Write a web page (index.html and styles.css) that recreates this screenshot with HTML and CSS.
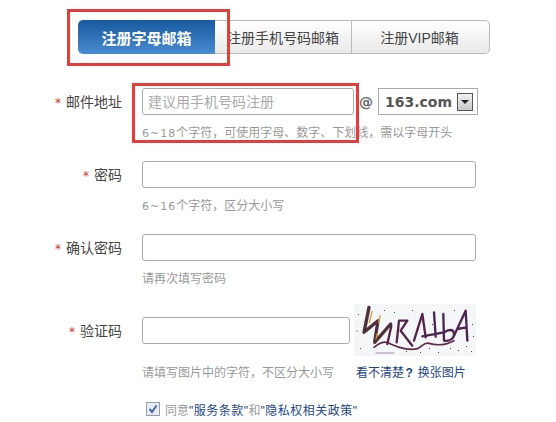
FILE: index.html
```html
<!DOCTYPE html>
<html lang="zh-CN">
<head>
  <meta charset="UTF-8">
  <title>注册邮箱</title>
  <link rel="stylesheet" href="styles.css">
</head>
<body>

<div class="page">
  <!-- Tabs -->
  <div class="tabs">
    <a class="tab tab-active">注册字母邮箱</a>
    <a class="tab tab-mid">注册手机号码邮箱</a>
    <a class="tab tab-last">注册VIP邮箱</a>
  </div>

  <!-- Mail address -->
  <div class="row">
    <label class="label"><span class="star">*</span>邮件地址</label>
    <div class="field">
      <div class="mail-line">
        <div class="input input-mail"><span class="placeholder">建议用手机号码注册</span></div>
        <span class="at">@</span>
        <div class="domain">
          <span class="domain-text">163.com</span>
          <span class="domain-arrow"></span>
        </div>
      </div>
      <p class="hint"><span class="num">6~18</span>个字符，可使用字母、数字、下划线，需以字母开头</p>
    </div>
  </div>

  <!-- Password -->
  <div class="row">
    <label class="label"><span class="star">*</span>密码</label>
    <div class="field">
      <div class="input input-wide"></div>
      <p class="hint"><span class="num">6~16</span>个字符，区分大小写</p>
    </div>
  </div>

  <!-- Confirm -->
  <div class="row">
    <label class="label"><span class="star">*</span>确认密码</label>
    <div class="field">
      <div class="input input-wide"></div>
      <p class="hint">请再次填写密码</p>
    </div>
  </div>

  <!-- Captcha -->
  <div class="row row-captcha">
    <label class="label"><span class="star">*</span>验证码</label>
    <div class="field">
      <div class="captcha-line">
        <div class="input input-code"></div>
        <svg class="captcha" width="122" height="52" viewBox="0 0 366 156">
          <rect width="366" height="156" fill="#f4f6f8"/>
          <g fill="none" stroke-linecap="round" stroke-linejoin="round">
            <path d="M45 10L30 85L72 50L62 115L110 60" stroke="#4e2f3c" stroke-width="10"/>
            <path d="M54 22L46 56M78 36L74 56M70 88L66 104" stroke="#c7a03c" stroke-width="4"/>
            <path d="M112 66L100 120" stroke="#55264a" stroke-width="7"/>
            <path d="M128 115L135 50L160 50L140 80L175 125" stroke="#55264a" stroke-width="7"/>
            <path d="M205 30L180 110M205 30L215 100" stroke="#55264a" stroke-width="7"/>
            <path d="M240 25L245 98M205 97L270 85" stroke="#4a2650" stroke-width="7"/>
            <path d="M268 30L270 110C285 112 302 105 300 88C298 74 282 76 270 86" stroke="#4a2650" stroke-width="7"/>
            <path d="M335 20L300 95M335 20L340 110M310 75L338 70" stroke="#4a2650" stroke-width="7"/>
            <path d="M60 130C75 118 90 108 110 120C135 132 170 140 190 134C205 128 210 114 225 118C245 124 270 126 300 110" stroke="#5e2a48" stroke-width="5"/>
            <path d="M66 147L120 147" stroke="#a58ab0" stroke-width="3"/>
          </g>
          <g fill="#444">
            <rect x="12" y="30" width="3" height="3"/><rect x="8" y="80" width="3" height="3"/>
            <rect x="90" y="18" width="3" height="3"/><rect x="120" y="24" width="3" height="3"/>
            <rect x="174" y="18" width="3" height="3"/><rect x="225" y="132" width="3" height="3"/>
            <rect x="252" y="144" width="3" height="3"/><rect x="288" y="132" width="3" height="3"/>
            <rect x="312" y="138" width="3" height="3"/><rect x="336" y="126" width="3" height="3"/>
            <rect x="351" y="141" width="3" height="3"/><rect x="300" y="18" width="3" height="3"/>
            <rect x="156" y="141" width="3" height="3"/><rect x="198" y="144" width="3" height="3"/>
            <rect x="18" y="132" width="3" height="3"/><rect x="354" y="60" width="3" height="3"/>
            <rect x="357" y="96" width="3" height="3"/><rect x="234" y="60" width="3" height="3"/>
          </g>
        </svg>
      </div>
      <div class="captcha-foot">
        <p class="hint hint-captcha">请填写图片中的字符，不区分大小写</p>
        <a class="change-link">看不清楚<b class="ask">?</b> 换张图片</a>
      </div>
    </div>
  </div>

  <!-- Agreement -->
  <div class="agree">
    <svg class="check" width="14" height="14" viewBox="0 0 14 14">
      <rect x="0.5" y="0.5" width="13" height="13" fill="#e6ebf5" stroke="#9a9ea6"/>
      <path d="M3.5 7L6 10L10.5 3.5" fill="none" stroke="#4a68a8" stroke-width="2"/>
    </svg>
    <span>同意</span><a class="agree-link">"服务条款"</a><span>和</span><a class="agree-link">"隐私权相关政策"</a>
  </div>

  <!-- Red annotation boxes -->
  <div class="mark mark-tab"></div>
  <div class="mark mark-mail"></div>
</div>

</body>
</html>
```

FILE: styles.css
```css
* {
  box-sizing: border-box;
}

body {
  margin: 0;
  background-color: #fff;
  font-family: "Liberation Sans", "Noto Sans CJK SC", sans-serif;
  color: #444;
}

.page {
  position: relative;
  width: 556px;
  height: 422px;
  padding-top: 20px;
  overflow: hidden;
}

/* Tabs */
.tabs {
  display: flex;
  width: 412px;
  height: 34px;
  margin-left: 78px;
  margin-bottom: 34px;
}

.tab {
  display: flex;
  align-items: center;
  justify-content: center;
  height: 34px;
  font-size: 14px;
  color: #444;
  background: linear-gradient(#fff, #e9e9e9);
  border: 1px solid #bbb;
  border-left: none;
}

.tab-active {
  width: 137px;
  font-size: 15px;
  font-weight: bold;
  color: #fff;
  background: linear-gradient(#175a9f, #4a8bd0);
  border: none;
  border-radius: 5px 0 0 5px;
}

.tab-mid {
  width: 137px;
  border-right: 1px solid #bbb;
}

.tab-last {
  width: 138px;
  padding-right: 2px;
  border-radius: 0 5px 5px 0;
}

/* Form rows */
.row {
  display: flex;
  height: 73px;
}

.row-captcha {
  height: 83px;
  margin-top: 10px;
}

.label {
  width: 122px;
  height: 27px;
  margin-right: 20px;
  text-align: right;
  font-size: 14px;
  line-height: 28px;
  color: #444;
}

.star {
  margin-right: 5px;
  font-family: "DejaVu Sans", sans-serif;
  font-size: 12px;
  color: #c33;
}

.field {
  flex: 1;
}

.input {
  height: 27px;
  border: 1px solid #aaa;
  border-radius: 3px;
  background-color: #fff;
}

.input-mail {
  width: 212px;
  padding-left: 5px;
}

.input-wide {
  width: 334px;
}

.input-code {
  width: 208px;
}

.placeholder {
  font-size: 14px;
  line-height: 27px;
  color: #aaa;
}

.mail-line {
  display: flex;
  align-items: center;
}

.at {
  width: 24px;
  text-align: center;
  font-family: "DejaVu Sans", sans-serif;
  font-size: 14px;
  font-weight: bold;
  color: #666;
}

.domain {
  display: flex;
  align-items: center;
  width: 100px;
  height: 27px;
  padding-left: 6px;
  border: 1px solid #aaa;
}

.domain-text {
  width: 72px;
  padding-top: 1px;
  font-family: "DejaVu Sans", sans-serif;
  font-size: 14px;
  font-weight: bold;
  color: #555;
}

.domain-arrow {
  position: relative;
  width: 16px;
  height: 18px;
  border: 1px solid #555;
  background: linear-gradient(#f2f2f2, #c9c9c9);
}

.domain-arrow::after {
  content: "";
  position: absolute;
  left: 3px;
  top: 6px;
  border-style: solid;
  border-width: 4px 4px 0;
  border-color: #222 transparent transparent;
}

.hint {
  margin: 9px 0 0;
  font-size: 12px;
  line-height: 18px;
  color: #999;
}

.num {
  font-family: "DejaVu Sans", sans-serif;
  font-size: 11px;
  letter-spacing: 1px;
}

/* Captcha */
.captcha-line {
  display: flex;
  align-items: center;
  gap: 4px;
  height: 27px;
}

.captcha {
  flex: none;
  margin-top: -1px;
}

.captcha-foot {
  display: flex;
  gap: 20px;
  margin-top: 18px;
}

.hint-captcha {
  margin: 2px 0 0;
  width: 194px;
}

.change-link {
  margin-top: 2px;
  font-size: 12px;
  line-height: 18px;
  color: #1c4587;
  white-space: nowrap;
}

.ask {
  margin: 0 1.5px;
}

/* Agreement */
.agree {
  display: flex;
  align-items: center;
  height: 18px;
  margin-left: 146px;
  font-size: 12px;
  color: #999;
}

.check {
  margin-right: 5px;
}

.agree-link {
  letter-spacing: 0.5px;
  color: #1c4587;
}

/* Annotation boxes drawn over the form */
.mark {
  position: absolute;
  border: 3px solid #e53c3c;
}

.mark-tab {
  left: 67px;
  top: 9px;
  width: 163px;
  height: 57px;
}

.mark-mail {
  left: 132px;
  top: 83px;
  width: 227px;
  height: 60px;
}
```
